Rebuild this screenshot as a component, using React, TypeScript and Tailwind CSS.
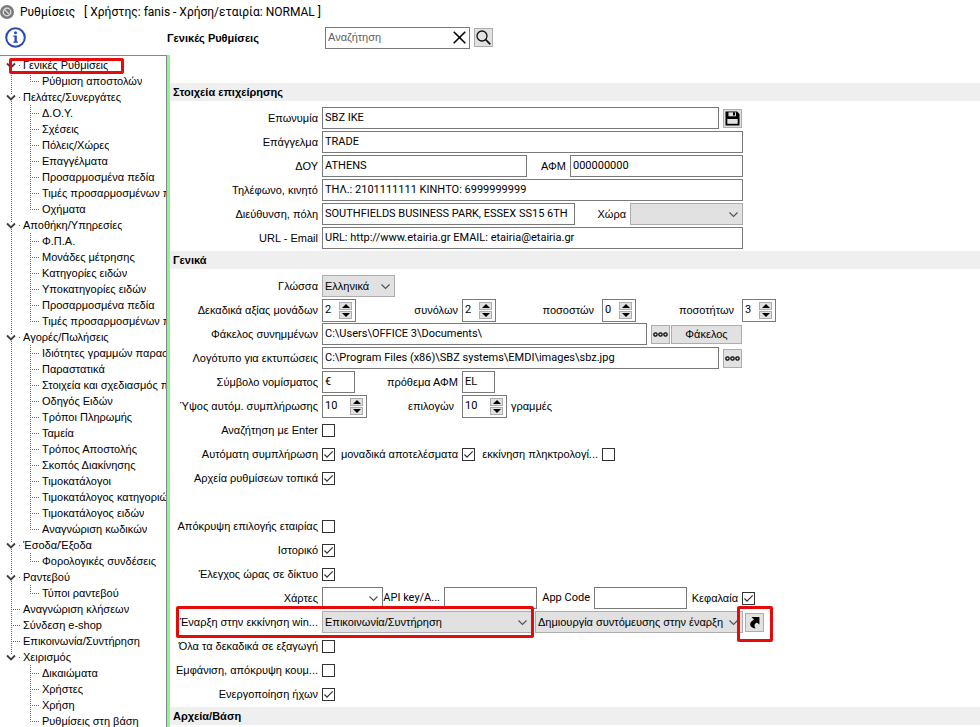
import { clsx } from "clsx";
import { useState, type ReactNode } from "react";

type Node = { label: string; children?: string[] };

const tree: Node[] = [
  { label: "Γενικές Ρυθμίσεις", children: ["Ρύθμιση αποστολών"] },
  {
    label: "Πελάτες/Συνεργάτες",
    children: [
      "Δ.Ο.Υ.",
      "Σχέσεις",
      "Πόλεις/Χώρες",
      "Επαγγέλματα",
      "Προσαρμοσμένα πεδία",
      "Τιμές προσαρμοσμένων πεδίων",
      "Οχήματα",
    ],
  },
  {
    label: "Αποθήκη/Υπηρεσίες",
    children: [
      "Φ.Π.Α.",
      "Μονάδες μέτρησης",
      "Κατηγορίες ειδών",
      "Υποκατηγορίες ειδών",
      "Προσαρμοσμένα πεδία",
      "Τιμές προσαρμοσμένων πεδίων",
    ],
  },
  {
    label: "Αγορές/Πωλήσεις",
    children: [
      "Ιδιότητες γραμμών παραστατικών",
      "Παραστατικά",
      "Στοιχεία και σχεδιασμός παραστατικών",
      "Οδηγός Ειδών",
      "Τρόποι Πληρωμής",
      "Ταμεία",
      "Τρόπος Αποστολής",
      "Σκοπός Διακίνησης",
      "Τιμοκατάλογοι",
      "Τιμοκατάλογος κατηγοριών",
      "Τιμοκατάλογος ειδών",
      "Αναγνώριση κωδικών",
    ],
  },
  { label: "Έσοδα/Έξοδα", children: ["Φορολογικές συνδέσεις"] },
  { label: "Ραντεβού", children: ["Τύποι ραντεβού"] },
  { label: "Αναγνώριση κλήσεων" },
  { label: "Σύνδεση e-shop" },
  { label: "Επικοινωνία/Συντήρηση" },
  { label: "Χειρισμός", children: ["Δικαιώματα", "Χρήστες", "Χρήση", "Ρυθμίσεις στη βάση"] },
];

function Dots({ d }: { d: string }) {
  return <path d={d} stroke="#6b6b6b" strokeDasharray="1 1" fill="none" shapeRendering="crispEdges" />;
}

function RootLines({ first, last, open }: { first: boolean; last: boolean; open: boolean }) {
  return (
    <svg width="23" height="16" className="shrink-0" aria-hidden="true">
      {open ? (
        <>
          {!first && <Dots d="M11.5 0V5" />}
          {!last && <Dots d="M11.5 12V16" />}
          <path d="M7 6.5L11 10.5L15 6.5" stroke="#404040" strokeWidth="1.8" fill="none" />
          <Dots d="M19 8.5H20" />
        </>
      ) : (
        <>
          <Dots d="M11.5 0V16" />
          <Dots d="M11 8.5H20" />
        </>
      )}
    </svg>
  );
}

function ChildLines({ trunk, last }: { trunk: boolean; last: boolean }) {
  return (
    <svg width="42" height="16" className="shrink-0" aria-hidden="true">
      {trunk && <Dots d="M11.5 0V16" />}
      <Dots d={last ? "M30.5 0V9" : "M30.5 0V16"} />
      <Dots d="M30 8.5H39" />
    </svg>
  );
}

function TreeItem({ lines, label }: { lines: ReactNode; label: string }) {
  return (
    <a href="#" className="flex h-4 items-center">
      {lines}
      <span className="min-w-0 overflow-hidden whitespace-nowrap">{label}</span>
    </a>
  );
}

function Tree() {
  return (
    <nav
      aria-label="Ρυθμίσεις"
      className="relative w-[167px] shrink-0 overflow-hidden border-t border-r border-[#828790] bg-white pt-px"
    >
      <ul>
        {tree.map((node, i) => {
          const lastRoot = i === tree.length - 1;
          return (
            <li key={node.label}>
              <TreeItem
                lines={<RootLines first={i === 0} last={lastRoot} open={!!node.children} />}
                label={node.label}
              />
              {node.children && (
                <ul>
                  {node.children.map((child, j) => (
                    <li key={child}>
                      <TreeItem
                        lines={<ChildLines trunk={!lastRoot} last={j === node.children!.length - 1} />}
                        label={child}
                      />
                    </li>
                  ))}
                </ul>
              )}
            </li>
          );
        })}
      </ul>
      <Marker className="top-0.5 left-[9px] h-4 w-[115px]" />
    </nav>
  );
}

function Marker({ className }: { className: string }) {
  return (
    <div className={clsx("pointer-events-none absolute rounded-xs border-3 border-[#e30b0b]", className)} />
  );
}

function SectionTitle({ children }: { children: ReactNode }) {
  return <h2 className="h-[18px] bg-[#efefef] pl-[3px] text-[11px] leading-[18px] font-bold">{children}</h2>;
}

function Row({ children }: { children?: ReactNode }) {
  return <div className="relative flex h-6 items-center">{children}</div>;
}

function Label({ id, children, className = "w-[152px]" }: { id: string; children: ReactNode; className?: string }) {
  return (
    <label htmlFor={id} className={clsx("flex shrink-0 justify-end pr-1 whitespace-nowrap", className)}>
      {children}
    </label>
  );
}

function Text({ id, value = "", className }: { id: string; value?: string; className: string }) {
  return (
    <input
      id={id}
      type="text"
      defaultValue={value}
      className={clsx(
        "h-[22px] shrink-0 border border-[#7a7a7a] bg-white pb-0.5 pl-0.5 font-['Roboto',sans-serif] outline-none",
        className,
      )}
    />
  );
}

function Select({ id, label, value = "", className }: { id: string; label?: string; value?: string; className: string }) {
  return (
    <div className={clsx("relative flex h-[22px] shrink-0 border", className)}>
      <select id={id} aria-label={label} className="w-full appearance-none bg-transparent pl-0.5 outline-none">
        <option>{value}</option>
      </select>
      <svg width="9" height="6" className="pointer-events-none absolute top-2 right-1" aria-hidden="true">
        <path d="M0.5 0.5L4.5 4.5L8.5 0.5" stroke="#505050" strokeWidth="1.1" fill="none" />
      </svg>
    </div>
  );
}

function Spin({ id, value, className = "w-[34px]" }: { id: string; value: number; className?: string }) {
  const [n, setN] = useState(value);
  const arrow = "flex h-2 w-[13px] items-center justify-center border border-[#adadad] bg-[#e1e1e1]";
  return (
    <div className={clsx("flex h-[23px] shrink-0 items-center border border-[#7a7a7a] bg-white pr-[3px]", className)}>
      <input
        id={id}
        type="text"
        value={n}
        onChange={(e) => setN(Number(e.target.value) || 0)}
        className="h-full min-w-0 flex-1 pb-0.5 pl-0.5 font-['Roboto',sans-serif] outline-none"
      />
      <div className="flex flex-col gap-px">
        <button type="button" aria-label="Αύξηση" onClick={() => setN(n + 1)} className={arrow}>
          <svg width="8" height="4" aria-hidden="true">
            <path d="M0 4L4 0L8 4Z" />
          </svg>
        </button>
        <button type="button" aria-label="Μείωση" onClick={() => setN(n - 1)} className={arrow}>
          <svg width="8" height="4" aria-hidden="true">
            <path d="M0 0L4 4L8 0Z" />
          </svg>
        </button>
      </div>
    </div>
  );
}

function Check({ id, checked = false }: { id: string; checked?: boolean }) {
  return (
    <span className="relative flex size-[13px] shrink-0">
      <input
        id={id}
        type="checkbox"
        defaultChecked={checked}
        className="peer size-[13px] appearance-none border border-[#333] bg-white"
      />
      <svg
        width="13"
        height="13"
        className="pointer-events-none invisible absolute inset-0 peer-checked:visible"
        aria-hidden="true"
      >
        <path d="M2.5 6.5L5 9.2L10.7 3.3" stroke="#333" strokeWidth="1.2" fill="none" />
      </svg>
    </span>
  );
}

function ToolButton({ label, className, children }: { label?: string; className?: string; children: ReactNode }) {
  return (
    <button
      type="button"
      aria-label={label}
      className={clsx(
        "flex h-[19px] shrink-0 items-center justify-center border border-[#adadad] bg-[#e1e1e1]",
        className ?? "w-[19px]",
      )}
    >
      {children}
    </button>
  );
}

function MoreIcon() {
  return (
    <svg width="15" height="5" fill="none" stroke="#000" strokeWidth="1.2" aria-hidden="true">
      <circle cx="2.5" cy="2.5" r="1.7" />
      <circle cx="7.5" cy="2.5" r="1.7" />
      <circle cx="12.5" cy="2.5" r="1.7" />
    </svg>
  );
}

function SaveIcon() {
  return (
    <svg width="15" height="15" viewBox="0 0 15 15" aria-hidden="true">
      <path d="M0.5 0.5H12L14.5 3V14.5H0.5Z" fill="#000" />
      <path d="M3.5 1.3H11V5.3H3.5Z" fill="#e1e1e1" />
      <path d="M8 1.3H10V4.6H8Z" fill="#000" />
      <path d="M2.3 8H12.7V12.8H2.3Z" fill="#e1e1e1" />
    </svg>
  );
}

function ShortcutIcon() {
  return (
    <svg width="13" height="13" viewBox="0 0 13 13" aria-hidden="true">
      <path d="M3.6 1H11.4V8.6L8.9 6.4C6.7 7.6 5.6 9.2 7.6 12.4C4.4 12.2 2 10.2 2.2 7.9C2.4 6 4.2 4.9 5.9 3.6Z" fill="#000" />
    </svg>
  );
}

function Header() {
  return (
    <header>
      <div className="flex h-6 items-center gap-1.5 font-['Roboto',sans-serif] text-xs">
        <svg width="14" height="14" viewBox="0 0 14 14" aria-hidden="true">
          <circle cx="7" cy="7" r="7" fill="#7b7b7b" />
          <circle cx="7" cy="7" r="3.8" fill="none" stroke="#e4e4e4" strokeWidth="1.2" />
          <path d="M4.4 4.4L9.6 9.6" stroke="#e4e4e4" strokeWidth="1.2" />
        </svg>
        <h1 className="whitespace-pre">Ρυθμίσεις   [ Χρήστης: fanis - Χρήση/εταιρία: NORMAL ]</h1>
      </div>
      <div className="flex h-[31px] items-center pb-1">
        <div className="flex w-[167px] shrink-0 pl-[5px]">
          <button type="button" aria-label="Πληροφορίες">
            <svg width="21" height="21" viewBox="0 0 21 21" aria-hidden="true">
              <circle cx="10.5" cy="10.5" r="9.3" fill="#fff" stroke="#2848b8" strokeWidth="2" />
              <circle cx="10.5" cy="5.8" r="1.5" fill="#2848b8" />
              <path d="M8.3 8.4H11.8V14.4H13V15.8H8.3V14.4H9.5V9.8H8.3Z" fill="#2848b8" />
            </svg>
          </button>
        </div>
        <p className="w-[158px] shrink-0 font-bold">Γενικές Ρυθμίσεις</p>
        <div className="flex h-[22px] w-[145px] items-center border border-[#7a7a7a] pr-[3px]">
          <input
            type="text"
            aria-label="Αναζήτηση"
            placeholder="Αναζήτηση"
            className="min-w-0 flex-1 pb-0.5 pl-0.5 outline-none placeholder:text-[#5f5f5f]"
          />
          <button type="button" aria-label="Καθαρισμός">
            <svg width="13" height="13" aria-hidden="true">
              <path d="M0.7 0.7L12.3 12.3M12.3 0.7L0.7 12.3" stroke="#000" strokeWidth="1.6" />
            </svg>
          </button>
        </div>
        <div className="pl-1">
          <ToolButton label="Εύρεση">
            <svg width="15" height="15" fill="none" stroke="#111" aria-hidden="true">
              <circle cx="6" cy="6" r="5" strokeWidth="1.3" />
              <path d="M9.7 9.7L14.3 14.3" strokeWidth="1.7" />
            </svg>
          </ToolButton>
        </div>
      </div>
    </header>
  );
}

const gray = "border-[#adadad] bg-[#e1e1e1]";

function Company() {
  return (
    <section>
      <SectionTitle>Στοιχεία επιχείρησης</SectionTitle>
      <div className="pt-[5px] pb-px">
        <Row>
          <Label id="name">Επωνυμία</Label>
          <Text id="name" value="SBZ IKE" className="mr-1 w-[397px]" />
          <ToolButton label="Αποθήκευση">
            <SaveIcon />
          </ToolButton>
        </Row>
        <Row>
          <Label id="job">Επάγγελμα</Label>
          <Text id="job" value="TRADE" className="w-[421px]" />
        </Row>
        <Row>
          <Label id="doy">ΔΟΥ</Label>
          <Text id="doy" value="ATHENS" className="w-[205px]" />
          <Label id="afm" className="w-[43px]">ΑΦΜ</Label>
          <Text id="afm" value="000000000" className="w-[173px]" />
        </Row>
        <Row>
          <Label id="phone">Τηλέφωνο, κινητό</Label>
          <Text id="phone" value="ΤΗΛ.: 2101111111 ΚΙΝΗΤΟ: 6999999999" className="w-[421px]" />
        </Row>
        <Row>
          <Label id="address">Διεύθυνση, πόλη</Label>
          <Text id="address" value="SOUTHFIELDS BUSINESS PARK, ESSEX SS15 6TH" className="w-[253px]" />
          <Label id="country" className="w-[55px]">Χώρα</Label>
          <Select id="country" className={clsx("w-[113px]", gray)} />
        </Row>
        <Row>
          <Label id="url">URL - Email</Label>
          <Text id="url" value="URL: http://www.etairia.gr EMAIL: etairia@etairia.gr" className="w-[421px]" />
        </Row>
      </div>
    </section>
  );
}

function General() {
  return (
    <section>
      <SectionTitle>Γενικά</SectionTitle>
      <div className="pt-[5px] pb-px">
        <Row>
          <Label id="lang">Γλώσσα</Label>
          <Select id="lang" value="Ελληνικά" className={clsx("w-[73px]", gray)} />
        </Row>
        <Row>
          <Label id="dec-unit">Δεκαδικά αξίας μονάδων</Label>
          <Spin id="dec-unit" value={2} />
          <Label id="dec-total" className="w-[106px]">συνόλων</Label>
          <Spin id="dec-total" value={2} />
          <Label id="dec-percent" className="mr-1 w-[102px]">ποσοστών</Label>
          <Spin id="dec-percent" value={0} />
          <Label id="dec-qty" className="mr-1 w-[102px]">ποσοτήτων</Label>
          <Spin id="dec-qty" value={3} />
        </Row>
        <Row>
          <Label id="folder">Φάκελος συνημμένων</Label>
          <Text id="folder" value={"C:\\Users\\OFFICE 3\\Documents\\"} className="mr-1 w-[325px]" />
          <ToolButton label="Επιλογή φακέλου">
            <MoreIcon />
          </ToolButton>
          <div className="pl-px">
            <ToolButton className="w-[71px]">Φάκελος</ToolButton>
          </div>
        </Row>
        <Row>
          <Label id="logo">Λογότυπο για εκτυπώσεις</Label>
          <Text id="logo" value={"C:\\Program Files (x86)\\SBZ systems\\EMDI\\images\\sbz.jpg"} className="mr-1 w-[397px]" />
          <ToolButton label="Επιλογή αρχείου">
            <MoreIcon />
          </ToolButton>
        </Row>
        <Row>
          <Label id="currency">Σύμβολο νομίσματος</Label>
          <Text id="currency" value="€" className="w-[33px]" />
          <Label id="prefix" className="w-[107px]">πρόθεμα ΑΦΜ</Label>
          <Text id="prefix" value="EL" className="w-[33px]" />
        </Row>
        <Row>
          <Label id="height">Ύψος αυτόμ. συμπλήρωσης</Label>
          <Spin id="height" value={10} className="w-[45px]" />
          <Label id="options" className="mr-1 w-[91px]">επιλογών</Label>
          <Spin id="options" value={10} className="w-[45px]" />
          <span className="pl-1">γραμμές</span>
        </Row>
        <Row>
          <Label id="enter">Αναζήτηση με Enter</Label>
          <Check id="enter" />
        </Row>
        <Row>
          <Label id="auto">Αυτόματη συμπλήρωση</Label>
          <Check id="auto" checked />
          <Label id="unique" className="w-[127px]">μοναδικά αποτελέσματα</Label>
          <Check id="unique" checked />
          <Label id="typing" className="w-[127px]">εκκίνηση πληκτρολογί...</Label>
          <Check id="typing" />
        </Row>
        <Row>
          <Label id="local">Αρχεία ρυθμίσεων τοπικά</Label>
          <Check id="local" checked />
        </Row>
        <Row />
        <Row>
          <Label id="hide-company">Απόκρυψη επιλογής εταιρίας</Label>
          <Check id="hide-company" />
        </Row>
        <Row>
          <Label id="history">Ιστορικό</Label>
          <Check id="history" checked />
        </Row>
        <Row>
          <Label id="clock">Έλεγχος ώρας σε δίκτυο</Label>
          <Check id="clock" checked />
        </Row>
        <Row>
          <Label id="maps">Χάρτες</Label>
          <Select id="maps" className="w-[61px] border-[#7a7a7a] bg-white" />
          <Label id="api-key" className="w-[61px] font-['Roboto',sans-serif]">API key/A...</Label>
          <Text id="api-key" className="w-[93px]" />
          <Label id="app-code" className="w-[57px] font-['Roboto',sans-serif]">App Code</Label>
          <Text id="app-code" className="w-[93px]" />
          <Label id="caps" className="w-[55px]">Κεφαλαία</Label>
          <Check id="caps" checked />
        </Row>
        <Row>
          <Label id="startup">Έναρξη στην εκκίνηση win...</Label>
          <Select id="startup" value="Επικοινωνία/Συντήρηση" className={clsx("mr-[3px] w-[210px]", gray)} />
          <Select
            id="shortcut"
            label="Συντόμευση"
            value="Δημιουργία συντόμευσης στην έναρξη"
            className={clsx("mr-0.5 w-[208px]", gray)}
          />
          <ToolButton label="Εκτέλεση">
            <ShortcutIcon />
          </ToolButton>
          <Marker className="-top-1 left-1.5 h-8 w-[358px]" />
          <Marker className="-top-1 left-[567px] h-9 w-9" />
        </Row>
        <Row>
          <Label id="decimals">Όλα τα δεκαδικά σε εξαγωγή</Label>
          <Check id="decimals" />
        </Row>
        <Row>
          <Label id="buttons">Εμφάνιση, απόκρυψη κουμ...</Label>
          <Check id="buttons" />
        </Row>
        <Row>
          <Label id="sounds">Ενεργοποίηση ήχων</Label>
          <Check id="sounds" checked />
        </Row>
      </div>
    </section>
  );
}

export default function App() {
  return (
    <div className="flex h-screen flex-col overflow-hidden bg-white font-['Liberation_Sans',Arial,sans-serif] text-[11px] leading-4 text-black">
      <Header />
      <div className="flex min-h-0 flex-1">
        <Tree />
        <main className="min-w-0 flex-1 overflow-hidden border-l-3 border-[#8cf78c] pt-7">
          <Company />
          <General />
          <SectionTitle>Αρχεία/Βάση</SectionTitle>
        </main>
      </div>
    </div>
  );
}
